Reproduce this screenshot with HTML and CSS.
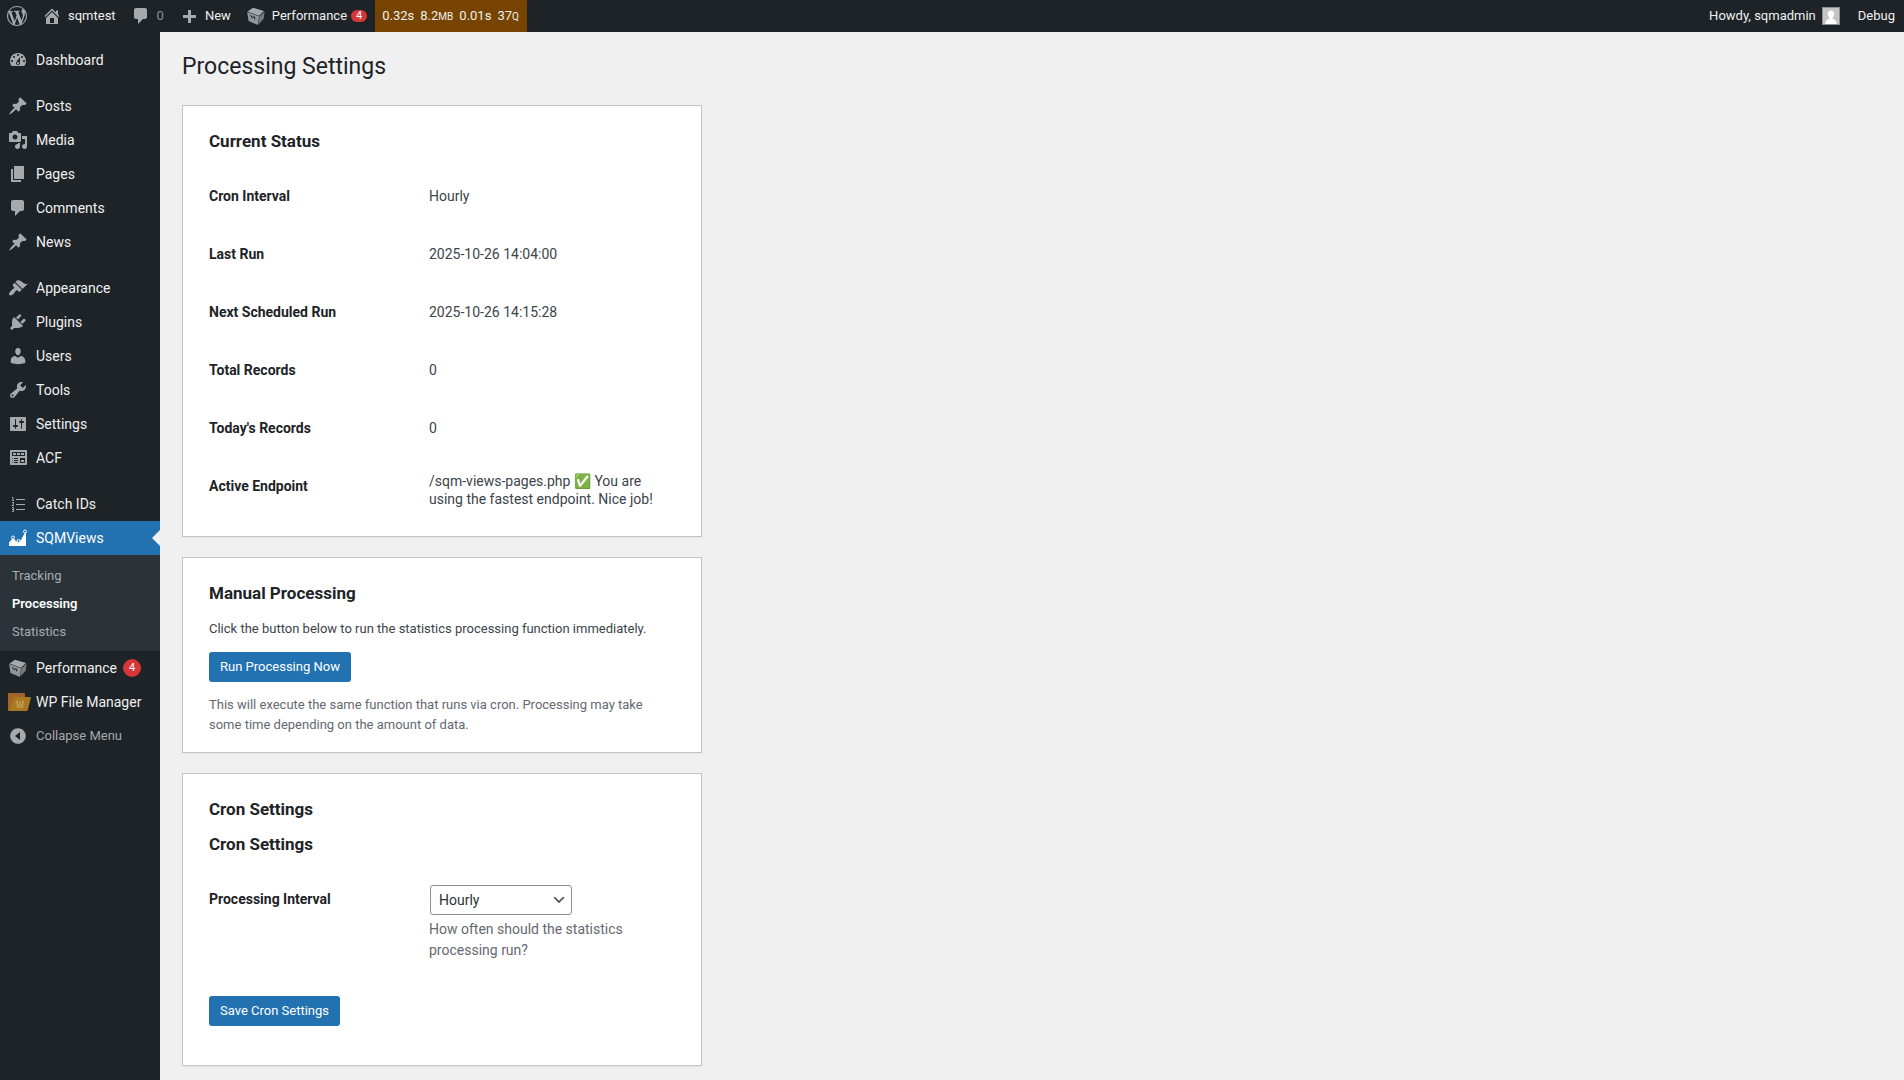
FILE: index.html
```html
<!DOCTYPE html>
<html lang="en">
<head>
  <meta charset="UTF-8">
  <meta name="viewport" content="width=device-width, initial-scale=1.0">
  <title>Processing Settings</title>
  <link rel="stylesheet" href="styles.css">
</head>
<body>
  <!-- shared icons -->
  <svg class="sprite" aria-hidden="true">
    <symbol id="i-comment" viewBox="0 0 20 20"><path d="M5 2h9c1.1 0 2 .9 2 2v7c0 1.1-.9 2-2 2h-2l-5 5v-5H5c-1.1 0-2-.9-2-2V4c0-1.1.9-2 2-2z"/></symbol>
    <symbol id="i-pin" viewBox="0 0 20 20"><path d="M10.44 3.02l1.82-1.82 6.36 6.35-1.83 1.82c-1.05-.68-2.48-.57-3.41.36l-.75.75c-.92.93-1.04 2.35-.35 3.41l-1.83 1.82-2.41-2.41-2.8 2.79c-.42.42-3.38 2.71-3.8 2.29s1.86-3.39 2.28-3.81l2.79-2.79L4.1 9.36l1.83-1.82c1.05.69 2.48.57 3.4-.36l.75-.75c.93-.92 1.05-2.35.36-3.41z"/></symbol>
    <symbol id="i-wp" viewBox="0 0 20 20"><path d="M20 10c0-5.51-4.49-10-10-10C4.48 0 0 4.49 0 10c0 5.52 4.48 10 10 10 5.51 0 10-4.48 10-10zM7.78 15.37L4.37 6.22c.55-.02 1.17-.08 1.17-.08.5-.06.44-1.13-.06-1.11 0 0-1.45.11-2.37.11-.18 0-.37 0-.58-.01C4.12 2.69 6.87 1.11 10 1.11c2.33 0 4.45.87 6.05 2.34-.68-.11-1.65.39-1.65 1.58 0 .74.45 1.36.9 2.1.35.61.55 1.36.55 2.46 0 1.49-1.4 5-1.4 5l-3.03-8.37c.54-.02.82-.17.82-.17.5-.05.44-1.25-.06-1.22 0 0-1.44.12-2.38.12-.87 0-2.33-.12-2.33-.12-.5-.03-.56 1.2-.06 1.22l.92.08 1.26 3.41zM17.41 10c.24-.64.74-1.87.43-4.25.7 1.29 1.05 2.71 1.05 4.25 0 3.29-1.73 6.24-4.4 7.78.97-2.59 1.94-5.2 2.92-7.78zM6.1 18.09C3.12 16.65 1.11 13.53 1.11 10c0-1.3.23-2.48.72-3.59C3.25 10.3 4.67 14.2 6.1 18.09zm4.03-6.63l2.58 6.98c-.86.29-1.76.45-2.71.45-.79 0-1.57-.11-2.29-.33.81-2.38 1.62-4.74 2.42-7.1z"/></symbol>
    <symbol id="i-cube" viewBox="0 0 20 20"><path d="M7 1.800l11 3.200-5 4.800L1.500 5.500z"/><path d="M18.600 5.500l-.8 7-5.300 6 .9-8z" opacity=".65"/><path d="M1.200 6l11.800 4.300-1 8.700-9.500-4z" opacity=".85"/><path d="M4 9.500l1.500.6.8 2 1-1.400 1.700.6-.6 2.200" fill="none" stroke="#1d2327" stroke-width="1"/></symbol>
  </svg>

  <header class="adminbar">
    <nav class="bar-group">
      <a class="bar-item" href="#" aria-label="About WordPress"><svg class="icon"><use href="#i-wp"/></svg></a>
      <a class="bar-item" href="#"><svg class="icon" viewBox="0 0 20 20"><path fill-rule="evenodd" d="M16 8.500l1.530 1.530-1.060 1.060L10 4.600l-6.470 6.490-1.060-1.060L10 2.500l4 4v-2h2v4zm-6-2.460l6 5.990V18H4v-5.970zM12 17v-5H8v5h4z"/></svg>sqmtest</a>
      <a class="bar-item dim" href="#"><svg class="icon"><use href="#i-comment"/></svg>0</a>
      <a class="bar-item" href="#"><svg class="icon" viewBox="0 0 20 20"><path d="M17 9v3h-5v5H9v-5H4V9h5V4h3v5z"/></svg>New</a>
      <a class="bar-item" href="#"><svg class="icon"><use href="#i-cube"/></svg>Performance<span class="bar-count">4</span></a>
      <a class="bar-item monitor" href="#"><span>0.32s</span><span>8.2<small>MB</small></span><span>0.01s</span><span>37<small>Q</small></span></a>
    </nav>
    <nav class="bar-group account">
      <a class="bar-item" href="#">Howdy, sqmadmin<svg class="avatar" viewBox="0 0 16 16"><path fill="#c4c4c4" d="M0 0h16v16H0z"/><path fill="#fff" d="M8 2.500c2 0 3.200 1.500 3.200 3.500 0 1.800-.7 3-1.700 3.800v.9c2 .5 4 1.600 4.300 5.300H2.200c.3-3.700 2.300-4.800 4.300-5.300v-.9C5.500 9 4.800 7.800 4.800 6 4.800 4 6 2.500 8 2.500z"/></svg></a>
      <a class="bar-item" href="#">Debug</a>
    </nav>
  </header>

  <div class="layout">
    <nav class="sidebar">
      <ul class="menu">
        <li><a href="#"><svg class="icon" viewBox="0 0 20 20"><path fill-rule="evenodd" d="M3.760 16h12.480c1.100-1.370 1.760-3.110 1.760-5 0-4.420-3.580-8-8-8s-8 3.580-8 8c0 1.890.66 3.630 1.760 5zM10 4c.55 0 1 .45 1 1s-.45 1-1 1-1-.45-1-1 .45-1 1-1zM6 6c.55 0 1 .45 1 1s-.45 1-1 1-1-.45-1-1 .45-1 1-1zm8 0c.55 0 1 .45 1 1s-.45 1-1 1-1-.45-1-1 .45-1 1-1zm-5.370 5.550L12 7v6c0 1.100-.9 2-2 2s-2-.9-2-2c0-.57.24-1.080.63-1.450zM4 10c.55 0 1 .45 1 1s-.45 1-1 1-1-.45-1-1 .45-1 1-1zm12 0c.55 0 1 .45 1 1s-.45 1-1 1-1-.45-1-1 .45-1 1-1zm-5 3c0-.55-.45-1-1-1s-1 .45-1 1 .45 1 1 1 1-.45 1-1z"/></svg>Dashboard</a></li>
      </ul>
      <ul class="menu">
        <li><a href="#"><svg class="icon"><use href="#i-pin"/></svg>Posts</a></li>
        <li><a href="#"><svg class="icon" viewBox="0 0 20 20"><path fill-rule="evenodd" d="M13 11V4c0-.55-.45-1-1-1h-1.670L9 1H5L3.670 3H2c-.55 0-1 .45-1 1v7c0 .55.45 1 1 1h10c.55 0 1-.45 1-1zM7 4.500c1.380 0 2.500 1.120 2.500 2.500S8.380 9.500 7 9.500 4.500 8.380 4.500 7 5.620 4.500 7 4.500zM14 6h5v10.500c0 1.380-1.120 2.500-2.500 2.500S14 17.880 14 16.500s1.120-2.500 2.500-2.500c.17 0 .34.02.5.05V9h-3V6zm-4 8.050V13h2v3.500c0 1.380-1.120 2.500-2.500 2.500S7 17.880 7 16.500 8.120 14 9.500 14c.17 0 .34.02.5.05z"/></svg>Media</a></li>
        <li><a href="#"><svg class="icon" viewBox="0 0 20 20"><path d="M6 15V2h10v13H6zm-1 1h8v2H3V5h2v11z"/></svg>Pages</a></li>
        <li><a href="#"><svg class="icon"><use href="#i-comment"/></svg>Comments</a></li>
        <li><a href="#"><svg class="icon"><use href="#i-pin"/></svg>News</a></li>
      </ul>
      <ul class="menu">
        <li><a href="#"><svg class="icon" viewBox="0 0 20 20"><path d="M14.480 11.060L7.410 3.990l1.500-1.500c.5-.56 2.300-.47 3.510.32 1.210.8 1.430 1.280 2.910 2.100 1.180.64 2.450 1.260 4.450.85zm-.71.71L6.700 4.700 4.930 6.470c-.39.39-.39 1.020 0 1.410l1.060 1.060c.39.39.39 1.030 0 1.420-.6.6-1.430 1.110-2.210 1.690-.35.26-.7.53-1.010.84C1.430 14.230.4 16.080 1.400 17.070c.99 1 2.840-.03 4.180-1.360.31-.31.58-.66.85-1.020.57-.78 1.080-1.610 1.690-2.210.39-.39 1.020-.39 1.410 0l1.060 1.060c.39.39 1.020.39 1.410 0z"/></svg>Appearance</a></li>
        <li><a href="#"><svg class="icon" viewBox="0 0 20 20"><path d="M13.110 4.360L9.870 7.600 8 5.730l3.240-3.240c.35-.34 1.050-.2 1.560.32.52.51.66 1.210.31 1.550zm-8 1.770l.91-1.120 9.010 9.010-1.190.84c-.71.71-2.630 1.160-3.820 1.160H6.140L4.900 17.260c-.59.59-1.540.59-2.120 0-.59-.58-.59-1.530 0-2.120l1.240-1.240v-3.880c0-1.130.4-3.190 1.090-3.890zm7.260 3.970l3.240-3.240c.34-.35 1.040-.21 1.550.31.52.51.66 1.210.31 1.550l-3.240 3.250z"/></svg>Plugins</a></li>
        <li><a href="#"><svg class="icon" viewBox="0 0 20 20"><path d="M10 9.250c-2.270 0-2.730-3.440-2.730-3.440C7 4.020 7.820 2 9.970 2c2.160 0 2.980 2.020 2.710 3.810 0 0-.41 3.440-2.680 3.440zm0 2.570L12.720 10c2.390 0 4.520 2.330 4.520 4.530v2.490s-3.650 1.130-7.240 1.130c-3.650 0-7.240-1.130-7.240-1.130v-2.490c0-2.250 1.940-4.480 4.470-4.480z"/></svg>Users</a></li>
        <li><a href="#"><svg class="icon" viewBox="0 0 20 20"><path fill-rule="evenodd" d="M16.680 9.770c-1.340 1.340-3.300 1.670-4.950.99l-5.410 6.520c-.99.99-2.590.99-3.580 0s-.99-2.590 0-3.570l6.520-5.420c-.68-1.650-.35-3.610.99-4.950 1.280-1.280 3.120-1.620 4.720-1.060l-2.890 2.890 2.820 2.820 2.860-2.870c.53 1.580.18 3.390-1.080 4.650zM3.810 16.210c.4.39 1.040.39 1.430 0 .4-.4.4-1.040 0-1.430-.39-.4-1.030-.4-1.430 0-.39.39-.39 1.030 0 1.430z"/></svg>Tools</a></li>
        <li><a href="#"><svg class="icon" viewBox="0 0 20 20"><path fill-rule="evenodd" d="M18 16V4c0-.55-.45-1-1-1H3c-.55 0-1 .45-1 1v12c0 .55.45 1 1 1h14c.55 0 1-.45 1-1zM8 11h1c.55 0 1 .45 1 1s-.45 1-1 1H8v1.500c0 .28-.22.5-.5.5s-.5-.22-.5-.5V13H6c-.55 0-1-.45-1-1s.45-1 1-1h1V5.500c0-.28.22-.5.5-.5s.5.22.5.5V11zm5-2h-1c-.55 0-1-.45-1-1s.45-1 1-1h1V5.500c0-.28.22-.5.5-.5s.5.22.5.5V7h1c.55 0 1 .45 1 1s-.45 1-1 1h-1v5.500c0 .28-.22.5-.5.5s-.5-.22-.5-.5V9z"/></svg>Settings</a></li>
        <li><a href="#"><svg class="icon" viewBox="0 0 20 20"><path fill-rule="evenodd" d="M19 16V3c0-.55-.45-1-1-1H3c-.55 0-1 .45-1 1v13c0 .55.45 1 1 1h15c.55 0 1-.45 1-1zM4 4h13v4H4V4zm1 1v2h3V5H5zm4 0v2h3V5H9zm4 0v2h3V5h-3zm-8.500 5c.28 0 .5.22.5.5s-.22.5-.5.5-.5-.22-.5-.5.22-.5.5-.5zM6 10h4v1H6v-1zm6 0h5v5h-5v-5zm-7.500 2c.28 0 .5.22.5.5s-.22.5-.5.5-.5-.22-.5-.5.22-.5.5-.5zM6 12h4v1H6v-1zm7 0v2h3v-2h-3zm-8.500 2c.28 0 .5.22.5.5s-.22.5-.5.5-.5-.22-.5-.5.22-.5.5-.5zM6 14h4v1H6v-1z"/></svg>ACF</a></li>
      </ul>
      <ul class="menu">
        <li><a href="#"><svg class="icon" viewBox="0 0 20 20"><path fill="none" stroke="#a7aaad" d="M8 5.500h9M8 10.500h9M8 15.500h9M4 3.500h1v3M4 6.500h2M4 8.500h1.500v1.500L4 11.500h2M4 13.500h1.500v4H4M4 15.500h1.500"/></svg>Catch IDs</a></li>
        <li class="current"><a href="#"><svg class="icon" viewBox="0 0 20 20"><path fill="#fff" d="M1 18v-3.500l4-4.500 4 4 4-2 4.500-8.500H18V18z"/><g fill="#2271b1" stroke="#fff"><circle cx="5" cy="9.500" r="1.500"/><circle cx="10.500" cy="13" r="1.500"/><circle cx="17" cy="3.500" r="1.500"/></g></svg>SQMViews</a>
          <ul class="submenu">
            <li><a href="#">Tracking</a></li>
            <li><a class="active" href="#">Processing</a></li>
            <li><a href="#">Statistics</a></li>
          </ul>
        </li>
        <li><a href="#"><svg class="icon"><use href="#i-cube"/></svg>Performance<span class="count">4</span></a></li>
        <li><a href="#"><svg class="icon folder" viewBox="0 0 24 20"><path fill="#a5632a" d="M1 2c0-.6.4-1 1-1h15c.6 0 1 .4 1 1v4L2 19H1z"/><path fill="#a87a1f" d="M7 5h16c.6 0 1 .4.800 1l-3 12c-.2.6-.6 1-1.200 1H2z"/><svg x="8.500" y="7.500" width="9" height="9" fill="#c8a56a"><use href="#i-wp"/></svg></svg>WP File Manager</a></li>
        <li><button class="collapse" type="button"><svg class="icon" viewBox="0 0 20 20"><path fill-rule="evenodd" d="M10 2.200c4.300 0 7.800 3.500 7.800 7.800s-3.500 7.800-7.800 7.800S2.200 14.300 2.200 10 5.700 2.200 10 2.200zM12 6l-5 4 5 4z"/></svg>Collapse Menu</button></li>
      </ul>
    </nav>

    <main class="content">
      <h1>Processing Settings</h1>

      <section class="card">
        <h2>Current Status</h2>
        <table class="form-table">
          <tr><th scope="row">Cron Interval</th><td>Hourly</td></tr>
          <tr><th scope="row">Last Run</th><td>2025-10-26 14:04:00</td></tr>
          <tr><th scope="row">Next Scheduled Run</th><td>2025-10-26 14:15:28</td></tr>
          <tr><th scope="row">Total Records</th><td>0</td></tr>
          <tr><th scope="row">Today's Records</th><td>0</td></tr>
          <tr><th scope="row">Active Endpoint</th><td>/sqm-views-pages.php ✅ You are using the fastest endpoint. Nice job!</td></tr>
        </table>
      </section>

      <section class="card">
        <h2>Manual Processing</h2>
        <p>Click the button below to run the statistics processing function immediately.</p>
        <button class="button" type="button">Run Processing Now</button>
        <p class="description">This will execute the same function that runs via cron. Processing may take some time depending on the amount of data.</p>
      </section>

      <section class="card">
        <h2>Cron Settings</h2>
        <h2>Cron Settings</h2>
        <form>
          <table class="form-table">
            <tr>
              <th scope="row"><label for="interval">Processing Interval</label></th>
              <td>
                <div class="select-wrap">
                  <select id="interval">
                    <option>Hourly</option>
                    <option>Twice Daily</option>
                    <option>Daily</option>
                  </select>
                  <svg class="chevron" viewBox="0 0 20 20"><path d="M5 6l5 5 5-5 2 1-7 7-7-7z"/></svg>
                </div>
                <p class="description">How often should the statistics processing run?</p>
              </td>
            </tr>
          </table>
          <p class="submit"><button class="button" type="submit">Save Cron Settings</button></p>
        </form>
      </section>
    </main>
  </div>
</body>
</html>
```
FILE: styles.css
```css
* {
  box-sizing: border-box;
}

body {
  margin: 0;
  background-color: #f0f0f1;
  color: #3c434a;
  font-family: Roboto, "Open Sans", sans-serif;
  font-size: 13px;
  line-height: 20px;
}

a {
  color: inherit;
  text-decoration: none;
}

ul {
  list-style: none;
  margin: 0;
  padding: 0;
}

.sprite {
  display: none;
}

.icon {
  width: 20px;
  height: 20px;
  flex: none;
  fill: #a7aaad;
}

/* top bar */
.adminbar {
  display: flex;
  justify-content: space-between;
  height: 32px;
  background-color: #1d2327;
  color: #f0f0f1;
}

.bar-group {
  display: flex;
}

.account {
  gap: 3px;
  padding-right: 1px;
}

.bar-item {
  display: flex;
  align-items: center;
  gap: 6px;
  padding: 0 8px 0 7px;
}

.bar-item.dim {
  color: #8c8f94;
}

.bar-count {
  padding: 0 5px;
  margin-left: -2px;
  border-radius: 6px;
  background-color: #d63638;
  color: #fff;
  font-size: 11px;
  line-height: 12px;
}

.monitor {
  background-color: #740;
}

.monitor small {
  font-size: 10px;
  line-height: 1;
}

.avatar {
  width: 18px;
  height: 18px;
  border: 1px solid #8c8f94;
}

/* side menu */
.layout {
  display: flex;
  min-height: calc(100vh - 32px);
}

.sidebar {
  width: 160px;
  flex: none;
  padding-top: 11px;
  background-color: #1d2327;
  color: #f0f0f1;
  font-size: 14px;
}

.menu + .menu {
  margin-top: 12px;
}

.menu > li > a,
.collapse {
  display: flex;
  align-items: center;
  gap: 8px;
  width: 100%;
  height: 34px;
  padding: 0 0 0 8px;
}

.collapse {
  border: 0;
  background: none;
  color: #a7aaad;
  font: inherit;
  font-size: 13px;
  text-align: left;
  cursor: pointer;
}

.menu > .current > a {
  position: relative;
  background-color: #2271b1;
  color: #fff;
}

.current > a::after {
  content: "";
  position: absolute;
  right: 0;
  top: 9px;
  border: 8px solid transparent;
  border-left: 0;
  border-right-color: #f0f0f1;
}

.submenu {
  padding: 7px 0 5px;
  background-color: #2c3338;
  color: #a9acae;
  font-size: 13px;
}

.submenu a {
  display: block;
  padding: 0 12px;
  line-height: 28px;
}

.submenu .active {
  color: #fff;
  font-weight: 600;
}

.count {
  width: 18px;
  margin-left: -2px;
  border-radius: 9px;
  background-color: #d63638;
  color: #fff;
  font-size: 11px;
  line-height: 18px;
  text-align: center;
}

.folder {
  width: 24px;
  margin: 0 -3px 0 -1px;
}

/* page */
.content {
  flex: 1;
  padding: 10px 20px 10px 22px;
}

h1 {
  margin: 0;
  padding: 10px 0 3px;
  color: #1d2327;
  font-size: 23px;
  font-weight: 400;
  line-height: 30px;
}

.card {
  max-width: 520px;
  margin-top: 20px;
  padding: 9px 26px 13px;
  border: 1px solid #c3c4c7;
  background-color: #fff;
  box-shadow: 0 1px 1px rgba(0, 0, 0, 0.04);
}

h2 {
  margin: 17px 0;
  color: #1d2327;
  font-size: 17px;
  font-weight: 700;
  line-height: 18px;
}

.card p {
  margin: 13px 0;
}

.card .description {
  margin-bottom: 4px;
  color: #646970;
}

.form-table {
  width: 100%;
  border-collapse: collapse;
  font-size: 14px;
  line-height: 18px;
}

.form-table th {
  width: 210px;
  padding: 20px 10px 20px 0;
  color: #1d2327;
  font-weight: 700;
  text-align: left;
  vertical-align: top;
}

.form-table td {
  padding: 15px 10px;
  vertical-align: middle;
}

.form-table .description {
  margin: 4px 0 0;
  line-height: 21px;
}

.select-wrap {
  position: relative;
  width: 142px;
  margin-left: 1px;
}

.select-wrap select {
  display: block;
  width: 100%;
  height: 30px;
  padding: 0 24px 0 8px;
  border: 1px solid #8c8f94;
  border-radius: 3px;
  background-color: #fff;
  color: #2c3338;
  font: inherit;
  appearance: none;
}

.chevron {
  position: absolute;
  right: 5px;
  top: 7px;
  width: 16px;
  height: 16px;
  fill: #555;
  pointer-events: none;
}

.button {
  display: block;
  height: 30px;
  padding: 0 11px;
  border: 0;
  border-radius: 3px;
  background-color: #2271b1;
  color: #fff;
  font: inherit;
  cursor: pointer;
}

.card .submit {
  margin: 20px 0 26px;
}
```
